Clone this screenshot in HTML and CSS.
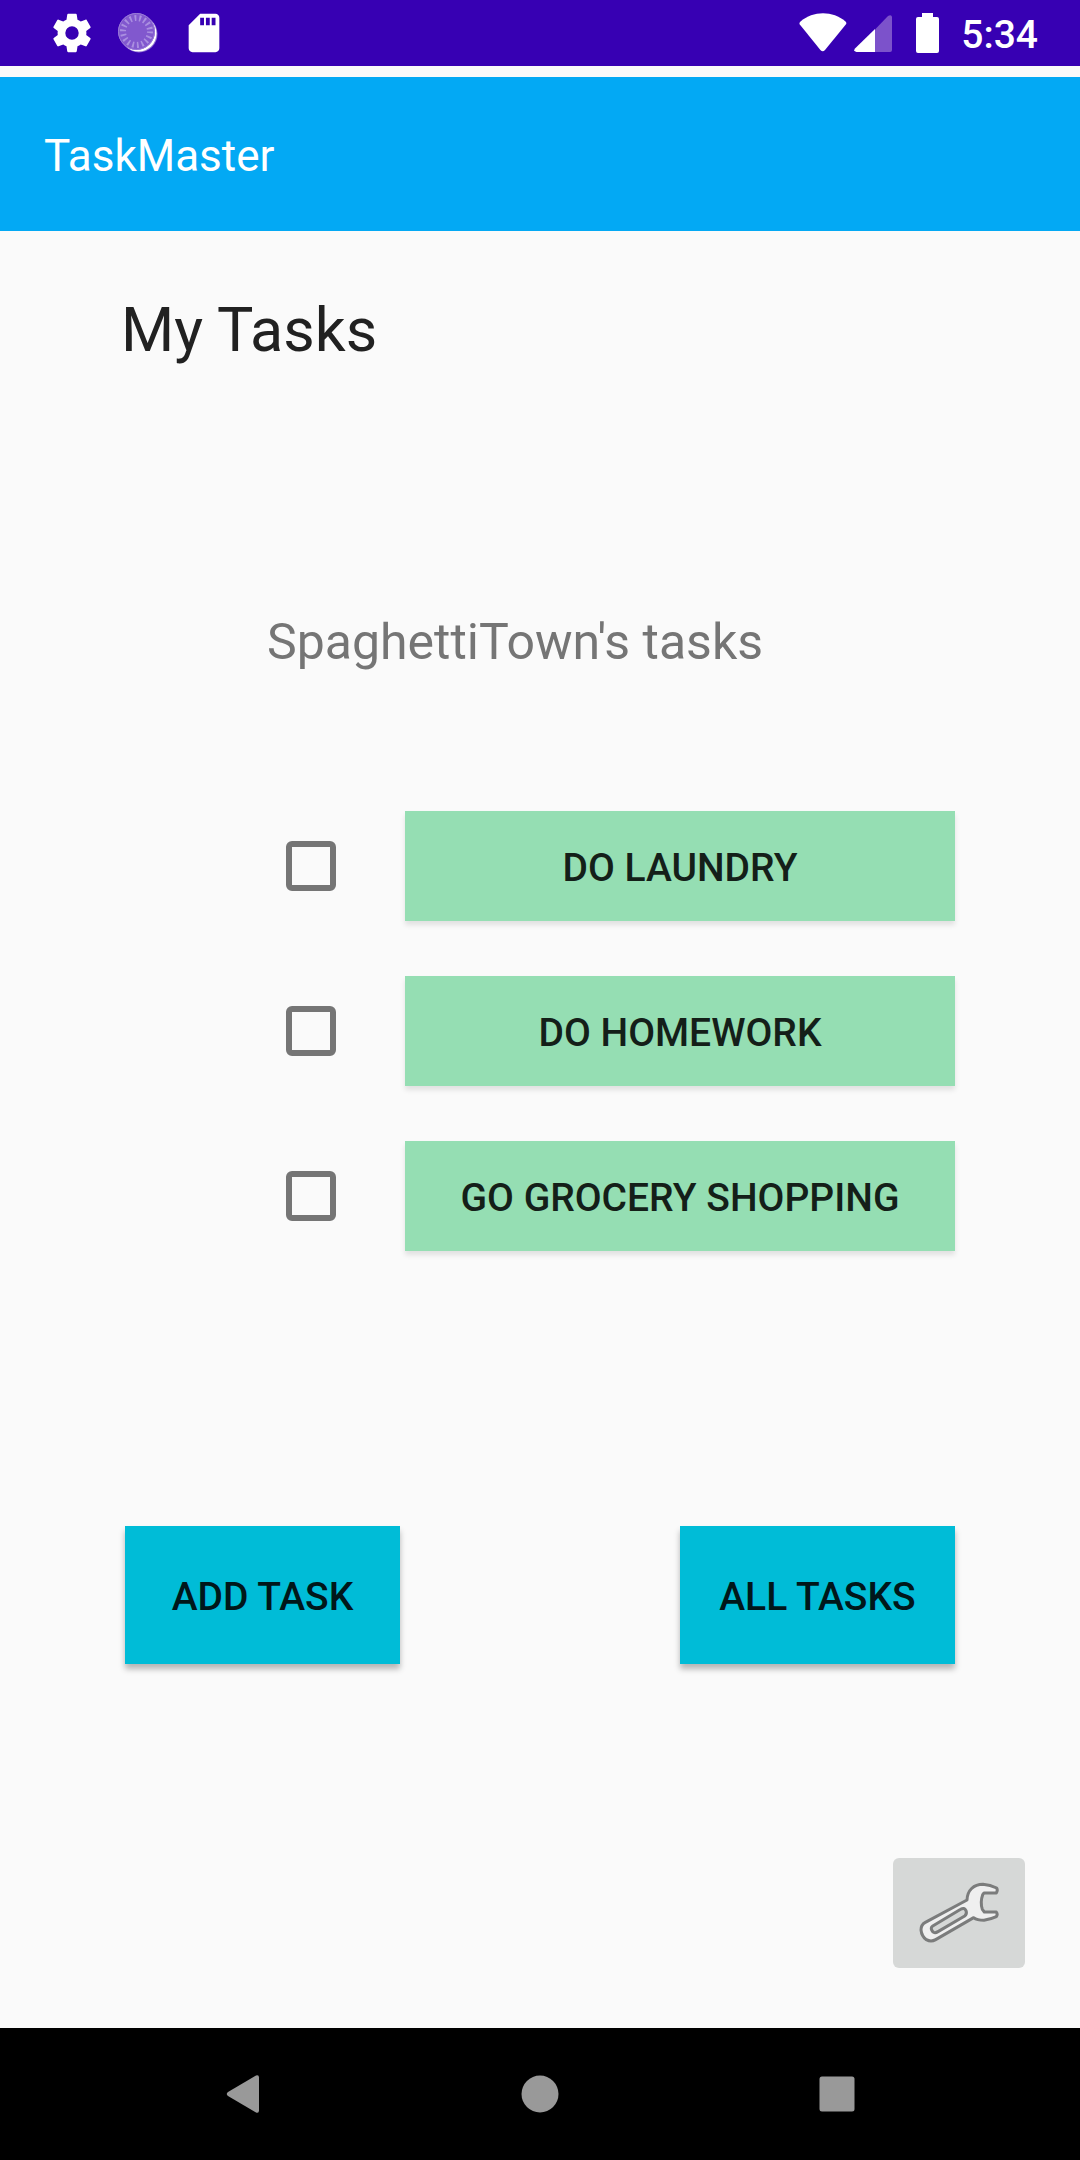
FILE: index.html
```html
<!DOCTYPE html>
<html lang="en">
<head>
<meta charset="utf-8">
<meta name="viewport" content="width=device-width, initial-scale=1">
<title>TaskMaster</title>
<link rel="stylesheet" href="styles.css">
</head>
<body>
<div class="status-bar">
  <div class="status-group notifications">
    <svg width="46" height="46" viewBox="0 0 24 24" fill="#fff" aria-hidden="true"><path d="M19.43 12.98c.04-.32.07-.64.07-.98s-.03-.66-.07-.98l2.11-1.65c.19-.15.24-.42.12-.64l-2-3.46c-.12-.22-.39-.3-.61-.22l-2.49 1c-.52-.4-1.08-.73-1.69-.98l-.38-2.65C14.46 2.18 14.25 2 14 2h-4c-.25 0-.46.18-.49.42l-.38 2.65c-.61.25-1.17.59-1.69.98l-2.49-1c-.23-.09-.49 0-.61.22l-2 3.46c-.13.22-.07.49.12.64l2.11 1.65c-.04.32-.07.65-.07.98s.03.66.07.98l-2.11 1.65c-.19.15-.24.42-.12.64l2 3.46c.12.22.39.3.61.22l2.49-1c.52.4 1.08.73 1.69.98l.38 2.65c.03.24.24.42.49.42h4c.25 0 .46-.18.49-.42l.38-2.65c.61-.25 1.17-.59 1.69-.98l2.49 1c.23.09.49 0 .61-.22l2-3.46c.12-.22.07-.49-.12-.64l-2.11-1.65zM12 15.500a3.500 3.500 0 1 1 0-7 3.500 3.500 0 0 1 0 7z"/></svg>
    <svg width="46" height="46" viewBox="0 0 46 46" aria-hidden="true">
      <circle cx="24" cy="24" r="18.500" fill="#8f70d2"/>
      <circle cx="23.500" cy="23.500" r="18" fill="#fff"/>
      <circle cx="21.500" cy="21.500" r="18.500" fill="#8158ce"/>
      <circle cx="21.500" cy="21.500" r="18" fill="none" stroke="#9a7bd9" stroke-width="1"/>
      <circle cx="21.500" cy="21.500" r="13.500" fill="none" stroke="#aa8fe0" stroke-width="6" stroke-dasharray="1.800 2.912"/>
    </svg>
    <svg width="46" height="46" viewBox="0 0 24 24" fill="#fff" aria-hidden="true"><path d="M18 2h-8L4 8.020V20c0 1.100.9 2 2 2h12c1.100 0 2-.9 2-2V4c0-1.100-.9-2-2-2zm-6 6h-2V4h2v4zm3 0h-2V4h2v4zm3 0h-2V4h2v4z"/></svg>
  </div>
  <div class="status-group">
    <svg width="48" height="40" viewBox="0 0 48 40" fill="#fff" aria-hidden="true"><path d="M1.500 8.500C14-2.500 34-2.500 46.500 8.500q1.500 1.500.3 3L26 37q-2.300 2.500-4.600 0L.8 11.500q-1-1.500.7-3z"/></svg>
    <svg class="signal" width="38" height="40" viewBox="0 0 38 40" aria-hidden="true"><path d="M21 16.500L34 3q3.500-2 4 1v33q0 2-2 2H21z" fill="#7c52cb"/><path d="M21 16v23H2.500q-3.500-.5-1.500-3.500z" fill="#fff"/></svg>
    <svg class="battery" width="23" height="40" viewBox="0 0 23 40" fill="#fff" aria-hidden="true"><path d="M6 0h11v4h4q2 0 2 2v32q0 2-2 2H2q-2 0-2-2V6q0-2 2-2h4z"/></svg>
    <span class="clock">5:34</span>
  </div>
</div>
<header class="app-bar">TaskMaster</header>
<main class="screen">
  <h1 class="title">My Tasks</h1>
  <h2 class="subtitle">SpaghettiTown's tasks</h2>
  <ul class="tasks">
    <li class="task"><input class="check" type="checkbox" aria-labelledby="task-1"><button class="btn btn-task" id="task-1" type="button">DO LAUNDRY</button></li>
    <li class="task"><input class="check" type="checkbox" aria-labelledby="task-2"><button class="btn btn-task" id="task-2" type="button">DO HOMEWORK</button></li>
    <li class="task"><input class="check" type="checkbox" aria-labelledby="task-3"><button class="btn btn-task" id="task-3" type="button">GO GROCERY SHOPPING</button></li>
  </ul>
  <div class="actions">
    <button class="btn btn-action" type="button">ADD TASK</button>
    <button class="btn btn-action" type="button">ALL TASKS</button>
  </div>
  <button class="settings" type="button" aria-label="Settings">
    <svg width="132" height="110" viewBox="69 54 396 330" fill="#efefef" stroke="#7b7c7c" stroke-width="9" stroke-linejoin="round" aria-hidden="true">
      <path d="M291 180C292 151 311 133 339 133Q361 135 380 144Q384 151 379 159H342L338 164Q330 187 337 208L343 216H379Q384 223 379 230Q362 238 342 241Q321 240 311 233L197 299Q183 307 169 299Q155 289 153 270Q153 254 166 247Z"/>
      <path fill="#d6d8d7" d="M187 259L272 208Q283 201 288 212Q292 222 284 228L204 275Q191 283 185 270Q182 263 187 259Z"/>
    </svg>
  </button>
</main>
<nav class="nav-bar">
  <button class="nav-btn" type="button" aria-label="Back"><svg width="40" height="40" viewBox="0 0 40 40" fill="#999" aria-hidden="true"><path d="M33 1.500q3-1 3 2v33q0 3-3 2L5 22q-2.500-2 0-4z"/></svg></button>
  <button class="nav-btn" type="button" aria-label="Home"><svg width="40" height="40" viewBox="0 0 40 40" fill="#999" aria-hidden="true"><circle cx="20" cy="20" r="18.500"/></svg></button>
  <button class="nav-btn" type="button" aria-label="Recent apps"><svg width="40" height="40" viewBox="0 0 40 40" fill="#999" aria-hidden="true"><rect x="2.500" y="2.500" width="35" height="35" rx="2.500"/></svg></button>
</nav>
</body>
</html>
```
FILE: styles.css
```css
* {
  box-sizing: border-box;
}

body {
  margin: 0;
  min-height: 100vh;
  display: flex;
  flex-direction: column;
  background: #fafafa;
  color: #212121;
  font-family: Roboto, sans-serif;
}

svg {
  display: block;
}

button {
  border: 0;
  padding: 0;
  font: inherit;
}

.status-bar {
  display: flex;
  align-items: center;
  justify-content: space-between;
  height: 66px;
  padding: 0 42px 0 49px;
  background: #3700b3;
  color: #fff;
}

.status-group {
  display: flex;
  align-items: center;
}

.notifications {
  gap: 20px;
}

.signal {
  margin-left: 7px;
}

.battery {
  margin: 0 22px 0 24px;
}

.clock {
  padding-top: 4px;
  font-size: 39px;
  font-weight: 500;
  line-height: 44px;
}

.app-bar {
  margin-top: 11px;
  padding: 53px 44px 49px;
  background: #03a9f4;
  color: #fff;
  font-size: 44px;
  line-height: 52px;
}

.screen {
  flex: 1;
  display: flex;
  flex-direction: column;
  padding: 64px 125px 60px;
}

.title,
.subtitle {
  margin: 0;
  font-weight: 400;
}

.title {
  margin-left: -4px;
  font-size: 61px;
  line-height: 70px;
}

.subtitle {
  margin: 248px 0 0 142px;
  color: #757575;
  font-size: 50px;
  line-height: 58px;
}

.tasks {
  display: flex;
  flex-direction: column;
  gap: 55px;
  margin: 140px 0 0;
  padding: 0 0 0 161px;
  list-style: none;
}

.task {
  display: flex;
  align-items: center;
  gap: 69px;
}

.check {
  appearance: none;
  width: 50px;
  height: 50px;
  margin: 0;
  border: 6px solid #757575;
  border-radius: 6px;
}

.check:checked {
  background: #757575;
}

.btn {
  color: #141f19;
  font-size: 39px;
  font-weight: 500;
  line-height: 46px;
}

.btn-task {
  flex: 1;
  padding: 34px 0 30px;
  background: #95deb3;
  box-shadow: 0 4px 5px rgba(0, 0, 0, 0.1);
}

.actions {
  display: flex;
  justify-content: space-between;
  margin-top: 275px;
}

.btn-action {
  width: 275px;
  padding: 48px 0 44px;
  background: #00bcd7;
  color: #00171a;
  box-shadow: 0 5px 6px rgba(0, 0, 0, 0.28);
}

.settings {
  align-self: flex-end;
  margin: auto -70px 0 0;
  border-radius: 6px;
  background: #d6d8d7;
}

.nav-bar {
  display: flex;
  align-items: center;
  justify-content: center;
  gap: 257px;
  height: 132px;
  background: #000;
}

.nav-btn {
  background: none;
}
```
